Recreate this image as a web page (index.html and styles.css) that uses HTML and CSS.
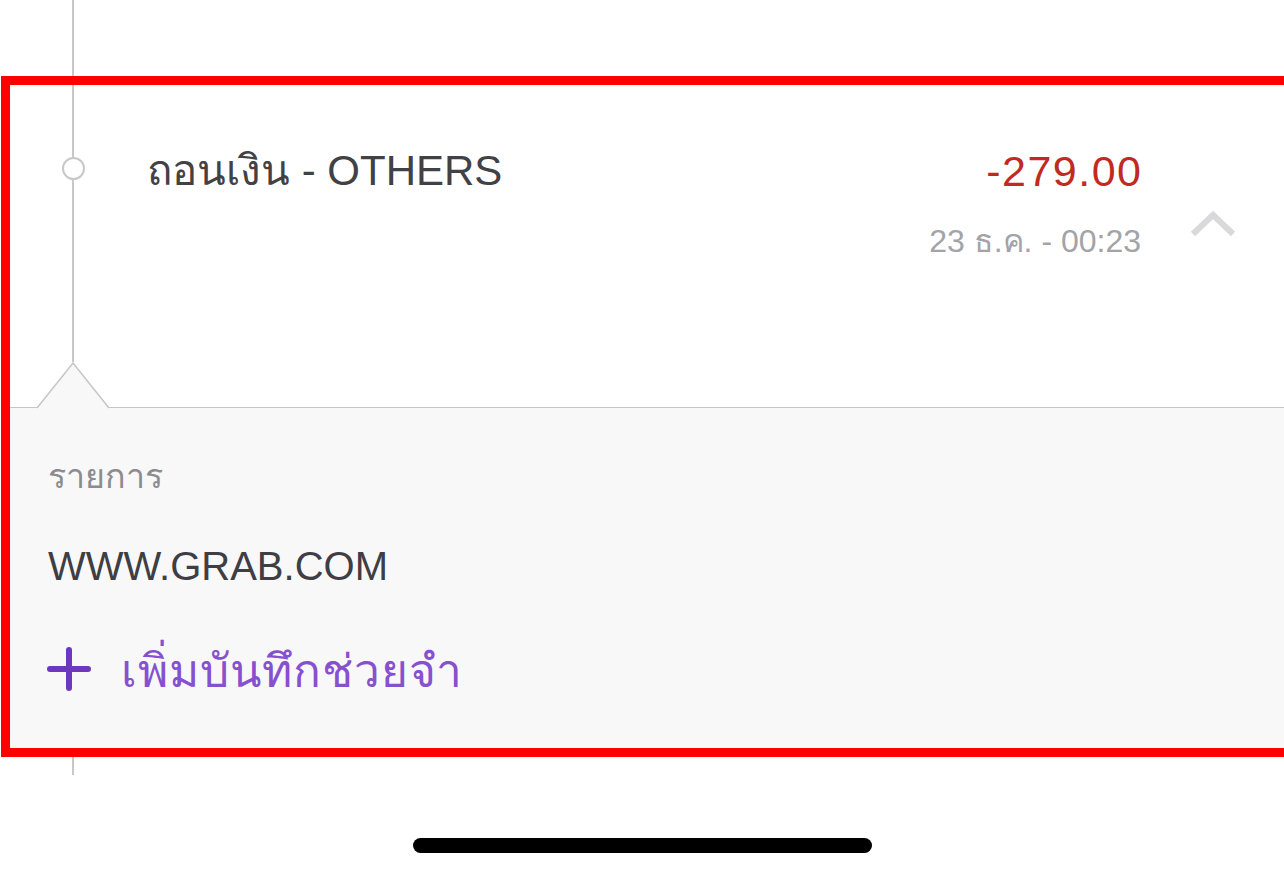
FILE: index.html
```html
<!DOCTYPE html>
<html lang="th">
<head>
  <meta charset="UTF-8">
  <title>รายการเคลื่อนไหว</title>
  <link rel="stylesheet" href="styles.css">
</head>
<body>

<div class="screen">
  <div class="track track-top"></div>

  <section class="frame">
    <div class="entry">
      <div class="rail">
        <span class="dot"></span>
      </div>
      <div class="entry-title">ถอนเงิน - OTHERS</div>
      <div class="entry-meta">
        <div class="amount">-279.00</div>
        <div class="date">23 ธ.ค. - 00:23</div>
      </div>
      <svg class="chevron" width="46" height="30" viewBox="0 0 46 30">
        <polyline points="3,26 23,7 43,26" fill="none" stroke="#d9d9db" stroke-width="6"/>
      </svg>
    </div>

    <div class="detail">
      <svg class="notch" width="72" height="47" viewBox="0 0 72 47">
        <polygon points="0,46 36,1 72,46" fill="#f8f8f8"/>
        <polyline points="0,46 36,1 72,46" fill="none" stroke="#c6c6c8" stroke-width="1.5"/>
      </svg>
      <div class="label">รายการ</div>
      <div class="merchant">WWW.GRAB.COM</div>
      <div class="add-note">
        <svg class="plus" width="44" height="44" viewBox="0 0 44 44">
          <path d="M22 3v38M3 22h38" stroke="#6c38c0" stroke-width="6" stroke-linecap="round"/>
        </svg>
        <span>เพิ่มบันทึกช่วยจำ</span>
      </div>
    </div>
  </section>

  <div class="track track-bottom"></div>

  <div class="home-bar"></div>
</div>

</body>
</html>
```

FILE: styles.css
```css
:root {
  --line-grey: #c8c8ca;
  --panel-bg: #f8f8f8;
  --text-dark: #414146;
  --purple: #8750cf;
}
* { margin: 0; padding: 0; box-sizing: border-box; }
body {
  font-family: 'Liberation Sans', 'Noto Sans', 'DejaVu Sans', sans-serif;
  background: #fff;
  width: 1284px;
  height: 876px;
  overflow: hidden;
}
.screen {
  display: flex;
  flex-direction: column;
  width: 1284px;
}
.track {
  margin-left: 72px;
  width: 2px;
  background: var(--line-grey);
}
.track-top { height: 76px; }
.track-bottom { height: 18px; }

/* red annotation frame */
.frame {
  margin-left: 1px;
  width: 1320px;
  border: 9px solid #ff0000;
}

.entry {
  display: flex;
  align-items: flex-start;
  height: 322px;
  background: #fff;
}
.rail {
  width: 137px;
  height: 277px;
  flex-shrink: 0;
  background: linear-gradient(var(--line-grey), var(--line-grey)) no-repeat 62px 0 / 2px 277px;
  padding-top: 72px;
  padding-left: 52px;
}
.dot {
  display: block;
  width: 23px;
  height: 23px;
  border-radius: 50%;
  border: 2px solid var(--line-grey);
  background: #fff;
}
.entry-title {
  margin-top: 61px;
  font-size: 42px;
  line-height: 50px;
  color: var(--text-dark);
  width: 700px;
}
.entry-meta {
  margin-top: 61px;
  width: 294px;
  text-align: right;
}
.amount {
  font-size: 43px;
  line-height: 50px;
  letter-spacing: 1.5px;
  margin-right: -1.5px;
  color: #c12a1f;
}
.date {
  margin-top: 26px;
  font-size: 32px;
  line-height: 38px;
  color: #a3a3a8;
}
.chevron {
  margin-top: 123px;
  margin-left: 49px;
}

.detail {
  position: relative;
  background: var(--panel-bg);
  border-top: 1.5px solid #c6c6c8;
  height: 341px;
  padding: 48px 0 0 38px;
}
.notch {
  position: absolute;
  left: 27px;
  top: -46px;
}
.label {
  font-size: 34px;
  line-height: 40px;
  color: #8c8c90;
}
.merchant {
  margin-top: 48px;
  font-size: 40px;
  line-height: 44px;
  color: #3e3e44;
}
.add-note {
  margin-top: 54px;
  display: flex;
  align-items: center;
  gap: 30px;
  color: var(--purple);
  font-size: 46px;
  line-height: 50px;
  letter-spacing: 1px;
}
.add-note span { margin-top: 4px; }
.plus { margin-left: -1px; }

.home-bar {
  align-self: center;
  margin-top: 63px;
  width: 459px;
  height: 15px;
  border-radius: 8px;
  background: #000;
}
```
